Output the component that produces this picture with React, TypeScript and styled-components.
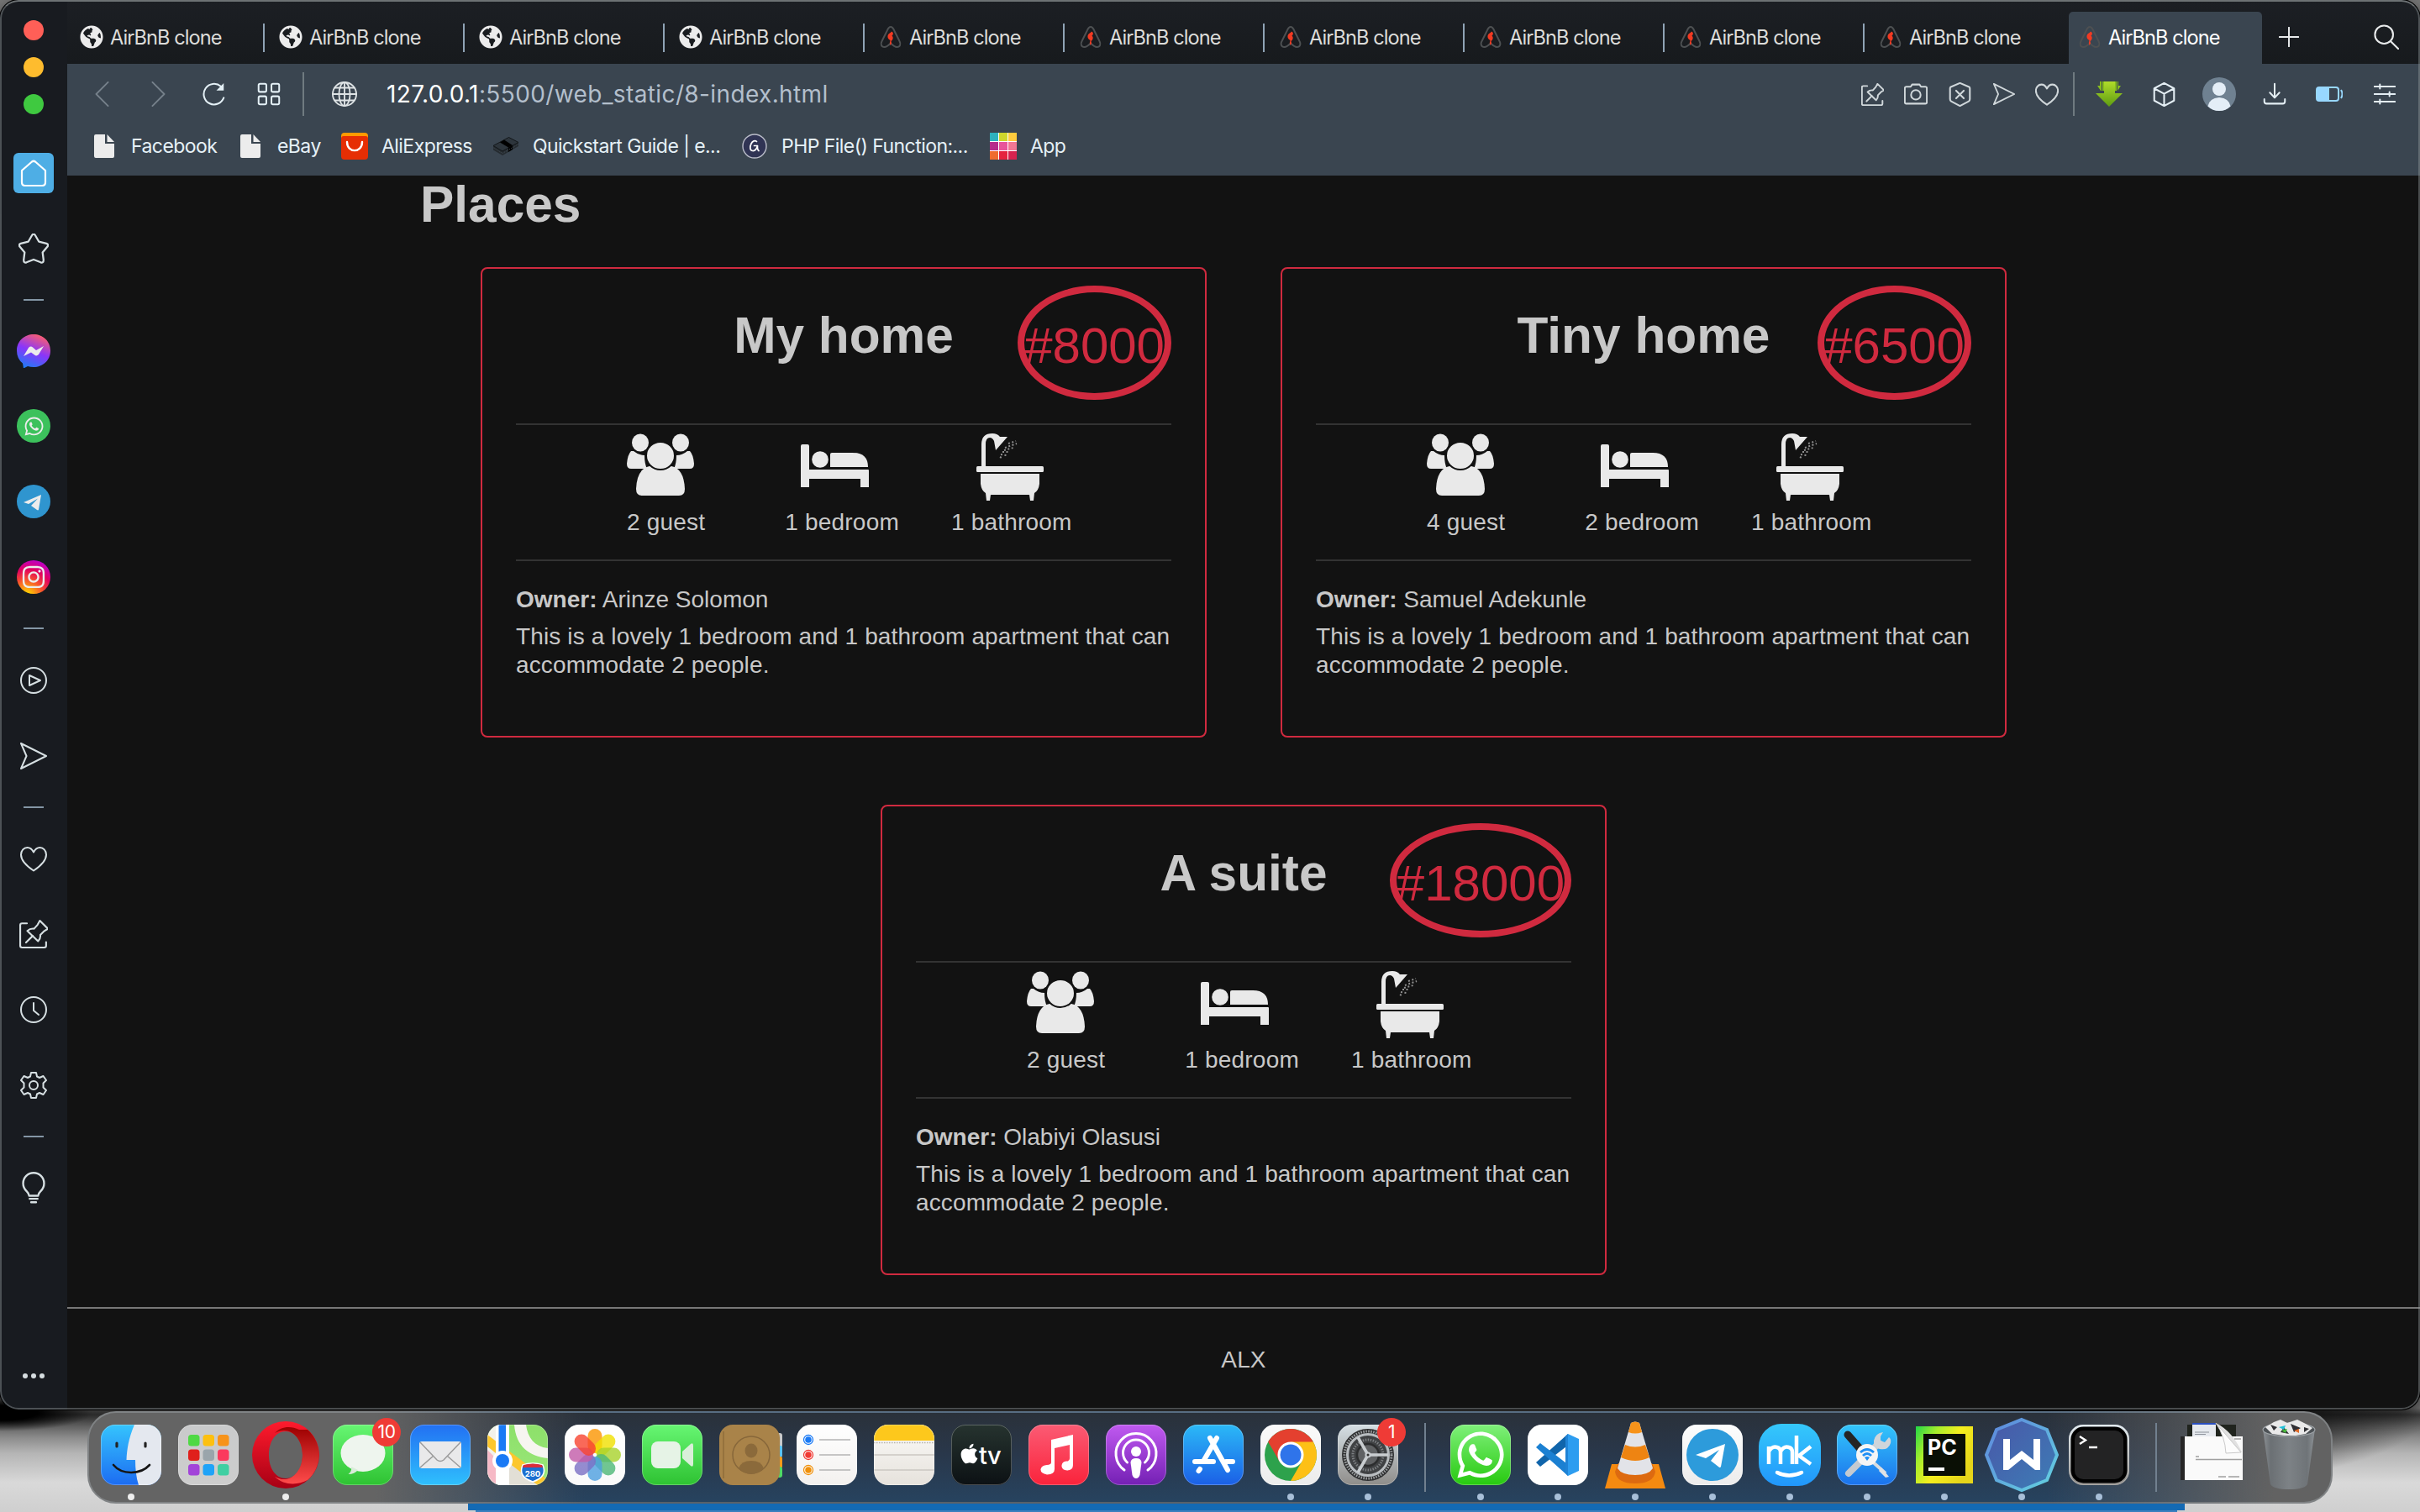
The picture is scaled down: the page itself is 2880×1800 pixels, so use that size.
import React from "react";
import styled, { createGlobalStyle } from "styled-components";
import { FaWhatsapp, FaInstagram, FaApple, FaGlobeAmericas } from "react-icons/fa";

const Global = createGlobalStyle`
  * { box-sizing: border-box; }
  html, body { margin: 0; padding: 0; }
  body { background: #8a8a8a; overflow: hidden; }
  svg { display: block; }
`;

const ui = `"Inter", "Noto Sans", sans-serif`;
const page = `"Liberation Sans", Arial, sans-serif`;

const Desktop = styled.div`
  width: 2880px;
  height: 1800px;
  display: flex;
  flex-direction: column;
  overflow: hidden;
  background:
    linear-gradient(#3a7fbe, #3a7fbe) 566px 1798px / 2025px 2px no-repeat,
    linear-gradient(#146ab4, #146ab4) 557px 1784px / 2043px 14px no-repeat,
    radial-gradient(ellipse 110px 22px at 0 1682px, #000 40%, transparent),
    radial-gradient(ellipse 330px 90px at 2560px 1680px, #111 40%, transparent),
    linear-gradient(to bottom, #777 0, #777 1676px, #3c3c3c 1684px, #8d8d8d 1712px, #b5b5b5 1730px, #d9d9d9 1765px, #cfcfcf 1800px);
`;

const Window = styled.div`
  height: 1678px;
  flex: none;
  display: flex;
  border-radius: 22px;
  overflow: hidden;
  background: #121212;
  position: relative;
  box-shadow: 0 0 0 1px #000, 0 6px 20px rgba(0, 0, 0, 0.6);
  &::after {
    content: "";
    position: absolute;
    inset: 0;
    border: 2px solid rgba(150, 158, 160, 0.42);
    border-top-color: #6d7274;
    border-radius: 22px;
    pointer-events: none;
  }
`;

const Sidebar = styled.aside`
  width: 80px;
  flex: none;
  background: #181b20;
  display: flex;
  flex-direction: column;
  align-items: center;
`;

const Lights = styled.div`
  height: 161px;
  flex: none;
  padding-top: 24px;
  display: flex;
  flex-direction: column;
  gap: 20px;
`;

const Light = styled.span<{ $c: string }>`
  width: 24px;
  height: 24px;
  border-radius: 50%;
  background: ${(p) => p.$c};
`;

const SideItem = styled.div<{ $h?: number }>`
  height: ${(p) => p.$h ?? 90}px;
  flex: none;
  display: flex;
  align-items: center;
  justify-content: center;
`;

const Dash = styled.span`
  width: 24px;
  height: 2px;
  background: #8496a5;
`;

const HomeTile = styled.span`
  width: 48px;
  height: 48px;
  border-radius: 6px;
  background: #4eaee5;
  display: flex;
  align-items: center;
  justify-content: center;
`;

const Puck = styled.span<{ $bg: string }>`
  width: 40px;
  height: 40px;
  border-radius: 50%;
  background: ${(p) => p.$bg};
  color: #ececec;
  display: flex;
  align-items: center;
  justify-content: center;
`;

const SideMore = styled.div`
  margin-top: auto;
  padding-bottom: 37px;
  display: flex;
  gap: 4px;
`;

const Dot6 = styled.i`
  width: 6px;
  height: 6px;
  border-radius: 50%;
  background: #d6dde0;
`;

const Main = styled.div`
  flex: 1;
  min-width: 0;
  display: flex;
  flex-direction: column;
`;

const TabStrip = styled.div`
  height: 76px;
  flex: none;
  background: linear-gradient(#1c1f24, #171a1d);
  display: flex;
  align-items: flex-end;
  padding-right: 25px;
`;

const Tab = styled.div<{ $first?: boolean }>`
  width: ${(p) => (p.$first ? 235 : 238)}px;
  height: 62px;
  flex: none;
  display: flex;
  align-items: center;
  padding: 0 0 2px ${(p) => (p.$first ? 15 : 17)}px;
  font: 400 23.6px ${ui};
  letter-spacing: -0.95px;
  color: #dcdcda;
  white-space: nowrap;
`;

const InactiveTab = styled(Tab)`
  background: linear-gradient(#8fa3b5, #8fa3b5) 100% 14px / 2px 34px no-repeat;
`;

const LastInactiveTab = styled(Tab)``;

const ActiveTab = styled(Tab)`
  width: 230px;
  margin-left: 5px;
  padding-left: 11px;
  background: #3a4550;
  border-radius: 5px 5px 0 0;
  color: #fff;
`;

const Favicon = styled.span`
  width: 28px;
  height: 28px;
  margin-right: 8px;
  display: flex;
  align-items: center;
  justify-content: center;
  color: #ececec;
`;

const StripButton = styled.div<{ $ml?: string }>`
  height: 62px;
  display: flex;
  align-items: center;
  padding-bottom: 2px;
  margin-left: ${(p) => p.$ml ?? "0"};
`;

const Toolbar = styled.div`
  height: 72px;
  flex: none;
  background: #3a4550;
  display: flex;
  align-items: center;
`;

const Slot = styled.span<{ $w: number }>`
  width: ${(p) => p.$w}px;
  flex: none;
  display: flex;
  justify-content: center;
`;

const Rule = styled.span`
  width: 2px;
  height: 52px;
  flex: none;
  background: #6f7a80;
`;

const Url = styled.div`
  flex: 1;
  padding-left: 18px;
  font: 400 28px ${ui};
  letter-spacing: 0.38px;
  color: #b3bfcc;
  b { font-weight: 400; color: #fff; }
`;

const Bookmarks = styled.div`
  height: 61px;
  flex: none;
  background: #3a4550;
  display: flex;
  align-items: center;
  padding: 0 0 9px 28px;
`;

const Bookmark = styled.div<{ $w: number }>`
  width: ${(p) => p.$w}px;
  display: flex;
  align-items: center;
  font: 400 23px ${ui};
  letter-spacing: -0.55px;
  color: #e6f1f7;
  white-space: nowrap;
`;

const MarkIcon = styled.span`
  width: 32px;
  margin-right: 16px;
  display: flex;
  justify-content: center;
`;

const Page = styled.main`
  flex: 1;
  display: flex;
  flex-direction: column;
  font: 400 28px/34px ${page};
  letter-spacing: 0.13px;
  color: #c8c8c8;
`;

const Heading = styled.h1`
  margin: 0;
  padding: 0 0 0 420px;
  height: 109px;
  font: 700 60.4px/68px ${page};
  letter-spacing: 0;
`;

const Places = styled.section`
  display: flex;
  flex-wrap: wrap;
  justify-content: center;
  gap: 80px 88px;
  padding: 0 480px;
`;

const Card = styled.article`
  width: 864px;
  height: 560px;
  border: 2px solid #d02a3f;
  border-radius: 8px;
  padding: 20px 40px 0;
  display: flex;
  flex-direction: column;
`;

const CardHead = styled.header`
  height: 164px;
  flex: none;
  display: grid;
  grid-template-columns: 1fr auto 1fr;
  align-items: start;
`;

const Title = styled.h2`
  grid-column: 2;
  margin: 24px 0 0;
  font: 700 60.4px/70px ${page};
  letter-spacing: 0;
`;

const Price = styled.div`
  justify-self: end;
  height: 136px;
  border: 8px solid #d02a3f;
  border-radius: 50%;
  color: #d02a3f;
  font: 400 60px/127px ${page};
  letter-spacing: 0;
`;

const Amenities = styled.div`
  height: 164px;
  flex: none;
  border-top: 2px solid #333;
  border-bottom: 2px solid #333;
  padding: 10px 0 0 132px;
`;

const AmenityIcons = styled.div`
  display: flex;
  gap: 127px;
  height: 84px;
`;

const AmenityLabels = styled.div`
  display: flex;
  padding-top: 5px;
  letter-spacing: 0.2px;
  white-space: nowrap;
`;

const Label = styled.span<{ $gap: number }>`
  margin-left: ${(p) => p.$gap}px;
`;

const Owner = styled.p`
  margin: 29px 0 10px;
  letter-spacing: 0;
`;

const About = styled.p`
  margin: 0 -2px 0 0;
`;

const Footer = styled.footer`
  margin-top: 38px;
  border-top: 2px solid #777;
  flex: 1;
  display: flex;
  justify-content: center;
  padding-top: 44px;
`;

const Dock = styled.div`
  margin: 2px 0 0 104px;
  width: 2672px;
  height: 110px;
  flex: none;
  border-radius: 34px;
  border: 2px solid rgba(190, 200, 205, 0.32);
  display: flex;
  padding: 0 4px;
  position: relative;
  background:
    linear-gradient(90deg, #646464 0, #646464 340px, rgba(100, 100, 100, 0) 590px, rgba(100, 100, 100, 0) 2330px, #626262 2600px),
    linear-gradient(#2a313a, #29374a 45%, #27435f);
`;

const DockCell = styled.div`
  width: 92px;
  flex: none;
  display: flex;
  flex-direction: column;
  align-items: center;
  padding-top: 14px;
  position: relative;
  svg { overflow: visible; }
`;

const Running = styled.i<{ $c: string }>`
  width: 8px;
  height: 8px;
  border-radius: 50%;
  margin-top: 10px;
  background: ${(p) => p.$c};
`;

const Badge = styled.span`
  position: absolute;
  left: 57px;
  top: 6px;
  width: 34px;
  height: 34px;
  border-radius: 50%;
  background: #ef3b36;
  color: #fff;
  font: 400 21px/34px ${ui};
  text-align: center;
  letter-spacing: -0.5px;
`;

const DockRule = styled.span`
  width: 42px;
  flex: none;
  display: flex;
  justify-content: center;
  &::before {
    content: "";
    width: 2px;
    height: 82px;
    margin: 12px 0 0 2px;
    background: #71808f;
  }
`;

type LineProps = { s?: number; w?: number; c?: string; children: React.ReactNode };
const Line = ({ s = 32, w = 2, c = "#d6dfe2", children }: LineProps) => (
  <svg width={s} height={s} viewBox="0 0 32 32" fill="none" stroke={c} strokeWidth={w} strokeLinecap="round" strokeLinejoin="round">
    {children}
  </svg>
);

const heart = <path d="M16 30.500C10 26.500 1 19.500 1 11.500C1 6.500 4.500 3 8.500 3C12 3 14.500 5.500 16 8.500C17.500 5.500 20 3 23.500 3C27.500 3 31 6.500 31 11.500C31 19.500 22 26.500 16 30.500Z" />;
const send = <path d="M1 1L31 16L1 31L7.500 16Z" />;
const pin = (
  <>
    <path d="M8.500 4H3Q1 4 1 6V29Q1 31 3 31H28Q30 31 30 29V25" />
    <path d="M23 1L32 10L28 12.500L23.500 17Q24 21 21 24L9 12.500Q12 9.500 16.500 10L20.500 5.500Z" />
    <path d="M15 18L7.500 25.500" />
  </>
);

const AirbnbMark = () => (
  <svg width="28" height="28" viewBox="0 0 28 28" fill="none">
    <path d="M14 2C11.500 2 10.800 4 9.500 7L3.500 19C1.500 22.500 3 26 6.500 26C9.500 26 12 23.500 14 21.500C16 23.500 18.500 26 21.500 26C25 26 26.500 22.500 24.500 19L18.500 7C17.200 4 16.500 2 14 2Z" stroke="#4d5052" strokeWidth="2" />
    <path d="M15 7.500C17.500 8.500 17.500 11 15.500 12.500C17.500 14.500 17 17 14.500 19L15 21.500L13.500 24L12.800 21L13.500 18C10.500 16.500 9.500 13 11.500 10.500C12.500 9.500 14 9 15 7.500Z" fill="#f13a22" />
  </svg>
);

const FileIcon = () => (
  <svg width="24" height="28" viewBox="0 0 24 28">
    <path d="M2 0H13V11H24V26Q24 28 22 28H2Q0 28 0 26V2Q0 0 2 0Z" fill="#ececec" />
    <path d="M15.500 0L24 9H15.500Z" fill="#ececec" />
  </svg>
);

const AliIcon = () => (
  <svg width="32" height="32" viewBox="0 0 32 32">
    <rect width="32" height="20" rx="4" fill="#ff9a00" />
    <path d="M0 7Q0 4 3 4H29Q32 4 32 7V28Q32 32 28 32H4Q0 32 0 28Z" fill="#e62e04" />
    <path d="M7 11C7 24.500 25 24.500 25 11" fill="none" stroke="#fff" strokeWidth="2.400" strokeLinecap="round" />
  </svg>
);

const QuickIcon = () => (
  <svg width="32" height="24" viewBox="0 0 32 24">
    <path d="M19.500 1.500L31 7.500V12L12 23L1 16.500V11.500Z" fill="#252b30" />
    <path d="M19.500 1.500L31 7.500L12 18L1 11.500Z" fill="#2d353c" stroke="#14181b" strokeWidth="1" />
    <path d="M14 4.500L9 7.500L19 13.500L24 11Z" fill="#000" />
    <path d="M19 13.500L24 11V16L19 19Z" fill="#000" />
    <path d="M1.500 14L12 20.500L31 9.500" stroke="#4a545c" strokeWidth=".9" strokeDasharray="1.200 1.200" fill="none" />
  </svg>
);

const PhpIcon = () => (
  <svg width="30" height="30" viewBox="0 0 30 30">
    <circle cx="15" cy="15" r="14" fill="#303454" stroke="#b9bcc8" strokeWidth="1.400" />
    <path d="M17.500 9.500C15.500 7.500 12.500 9 11 12C9 16 9.500 20 12.500 20.500C15.500 21 17.500 18 18.500 14.500H14.500M18.500 14.500C18.300 17 18.500 19.500 20 20.500" fill="none" stroke="#fff" strokeWidth="1.700" strokeLinecap="round" strokeLinejoin="round" />
  </svg>
);

const AppGridIcon = () => {
  const cols = ["#2fb1bd", "#cfd62c", "#ffcb3d", "#b62b8b", "#e8559a", "#f27794", "#ef6b2e", "#e5233f", "#d8234f"];
  return (
    <svg width="32" height="32" viewBox="0 0 32 32">
      <rect width="32" height="32" fill="#fff" />
      {cols.map((c, i) => (
        <rect key={c} x={(i % 3) * 11} y={Math.floor(i / 3) * 11} width="10" height="10" fill={c} />
      ))}
    </svg>
  );
};

const GuestIcon = () => (
  <svg width="80" height="80" viewBox="0 0 80 80" fill="#e9e9e9">
    <ellipse cx="16" cy="11" rx="10" ry="10.500" />
    <ellipse cx="64" cy="11" rx="10" ry="10.500" />
    <path d="M5 21Q1 25 0 36Q0 42 5 42L24 42Q21 36 21 26Q14 26 8 21Z" />
    <path d="M75 21Q79 25 80 36Q80 42 75 42L56 42Q59 36 59 26Q66 26 72 21Z" />
    <path d="M27 39Q12 42 11 66Q11 74 18 74H62Q69 74 69 66Q68 42 53 39Z" />
    <ellipse cx="40" cy="26.500" rx="17" ry="16.500" stroke="#121212" strokeWidth="2" />
  </svg>
);

const BedIcon = () => (
  <svg width="82" height="80" viewBox="0 0 82 80" fill="#e9e9e9">
    <path d="M0 15Q0 13 2 13H8Q10 13 10 15V43H80Q81 43 81 44V64H71V54H10V64H0Z" />
    <circle cx="23" cy="31" r="9.800" />
    <path d="M35 40V25Q35 23 37 23H62Q80 23 80 40Z" />
  </svg>
);

const BathIcon = () => (
  <svg width="80" height="84" viewBox="0 0 80 84" fill="#e9e9e9">
    <path d="M6 40V13Q6 0 19 0Q25 0 28 4L37 4L23 20L21 9Q19 5 16 5Q11 5 11 13V40Z" />
    <rect x="0" y="39" width="80" height="7" rx="1.500" />
    <path d="M5 48H75V60Q74 68 69 71L68 80H64L63 73H17L16 80H12L11 71Q6 68 5 60Z" />
    <g stroke="#8f8f8f" strokeWidth="2" strokeDasharray="2 2.500" fill="none">
      <path d="M34 17L48 12M33 20L44 17M31 22L40 22M29 25L36 26M28 28L32 30M38 12L47 9" />
    </g>
  </svg>
);

const Tile = ({ id, a, b, children }: { id: string; a: string; b: string; children?: React.ReactNode }) => (
  <svg width="72" height="72" viewBox="0 0 72 72">
    <defs>
      <linearGradient id={id} x1="0" y1="0" x2="0" y2="1">
        <stop offset="0" stopColor={a} />
        <stop offset="1" stopColor={b} />
      </linearGradient>
      <clipPath id={id + "c"}>
        <rect width="72" height="72" rx="17" />
      </clipPath>
    </defs>
    <g clipPath={`url(#${id}c)`}>
      <rect width="72" height="72" fill={`url(#${id})`} />
      {children}
    </g>
    <rect x=".5" y=".5" width="71" height="71" rx="16.500" fill="none" stroke="#fff" strokeOpacity=".25" />
  </svg>
);

const Finder = () => (
  <Tile id="finder" a="#35c4fd" b="#1c6cf2">
    <path d="M40 0C33 16 31 30 30.500 42H41C41 52 42 63 45 72H72V0Z" fill="#e4e8ef" />
    <path d="M19 22V26M53 22V26" stroke="#222" strokeWidth="3.200" strokeLinecap="round" />
    <path d="M15 48C25 60 47 60 58 48" fill="none" stroke="#151515" strokeWidth="2.600" strokeLinecap="round" />
  </Tile>
);

const Launchpad = () => {
  const c = ["#4fd944", "#fdc010", "#f7931a", "#e0201c", "#9aa5ab", "#fb3a5d", "#a243d9", "#1fa3f8", "#3fcfa2"];
  return (
    <Tile id="launch" a="#c9cacb" b="#cdcdcd">
      {c.map((f, i) => (
        <rect key={f} x={12 + (i % 3) * 17.500} y={12 + Math.floor(i / 3) * 17.500} width="13.500" height="13.500" rx="3.500" fill={f} />
      ))}
    </Tile>
  );
};

const Opera = () => (
  <svg width="80" height="80" viewBox="0 0 80 80">
    <defs>
      <linearGradient id="op1" x1="0" y1="0" x2="0" y2="1">
        <stop offset="0" stopColor="#ff1b2d" />
        <stop offset="1" stopColor="#a70014" />
      </linearGradient>
      <linearGradient id="op2" x1="0" y1="0" x2="0" y2="1">
        <stop offset="0" stopColor="#9c0000" />
        <stop offset="1" stopColor="#ff4b4b" />
      </linearGradient>
    </defs>
    <path fillRule="evenodd" d="M40 0A40 40 0 1 0 40 80A40 40 0 1 0 40 0ZM40 12C52 12 60 24 60 40S52 68 40 68S20 56 20 40S28 12 40 12Z" fill="url(#op1)" />
    <path d="M27 14C34 6 46 5 56 10L66 10A40 40 0 0 1 66 70C55 76 38 77 27 66C45 76 60 60 60 40S45 4 27 14Z" fill="url(#op2)" />
  </svg>
);

const Messages = () => (
  <Tile id="msg" a="#67f673" b="#2ec232">
    <ellipse cx="36" cy="34" rx="26.500" ry="22" fill="#eef5ee" />
    <path d="M22 50Q23 56 18.500 59Q26 59 30 54Z" fill="#d9ecd9" />
  </Tile>
);

const Mail = () => (
  <Tile id="mail" a="#2270f2" b="#2fc0fd">
    <rect x="11" y="20" width="50" height="32" rx="3" fill="#e9e9ea" />
    <path d="M12 21L32 42Q36 45 40 42L60 21M12 51L28 37M60 51L44 37" fill="none" stroke="#9b9b9b" strokeWidth="1.500" />
  </Tile>
);

const Maps = () => (
  <Tile id="maps" a="#8de06a" b="#9be77a">
    <path d="M0 0H26V72H0Z" fill="#f3f1ea" />
    <path d="M0 30L10 40V72H0Z" fill="#f6b9c6" />
    <path d="M0 12L72 66V72H58L0 26Z" fill="#fcc72e" />
    <path d="M32 0C34 26 50 38 72 40V28C56 26 48 16 46 0Z" fill="#f6f5f0" />
    <path d="M26 46L60 72H26Z" fill="#e2dfd6" />
    <rect x="10" y="0" width="16" height="72" fill="#fff" />
    <rect x="13.500" y="0" width="8.500" height="42" fill="#1a7af5" />
    <circle cx="18" cy="43" r="12" fill="#fff" />
    <circle cx="18" cy="43" r="8" fill="#1a7af5" />
    <path d="M42 48Q54 44 66 48Q72 62 54 68Q36 62 42 48Z" fill="#1b6fd0" stroke="#fff" strokeWidth="1.500" />
    <path d="M43 48Q54 45 65 48L66 51H42Z" fill="#d92d3a" />
    <text x="54" y="61.500" fontSize="9.500" fontFamily="Inter" fontWeight="700" fill="#fff" textAnchor="middle">280</text>
  </Tile>
);

const Photos = () => {
  const c = ["#fb9500", "#f0e000", "#a8d22a", "#4db877", "#4c9fe0", "#7b6fc4", "#c25aa8", "#f8432f"];
  return (
    <Tile id="photos" a="#fff" b="#fafafa">
      {c.map((f, i) => (
        <rect key={f} x="27.500" y="5" width="17" height="29" rx="8.500" fill={f} fillOpacity=".8" transform={`rotate(${i * 45} 36 36)`} />
      ))}
    </Tile>
  );
};

const FaceTime = () => (
  <Tile id="ft" a="#67f673" b="#2ec232">
    <rect x="11" y="20" width="35" height="32" rx="8" fill="#e6f3e6" />
    <path d="M48 32L58 23Q61 21 61 25V47Q61 51 58 49L48 40Z" fill="#d9efd9" />
  </Tile>
);

const Contacts = () => (
  <svg width="72" height="72" viewBox="0 0 72 72">
    <rect x="60" y="10" width="15" height="18" rx="3" fill="#c9c9c9" />
    <rect x="60" y="25" width="15" height="14" rx="2" fill="#5ac1f2" />
    <rect x="60" y="38" width="15" height="14" rx="2" fill="#f79a1a" />
    <rect x="60" y="50" width="15" height="13" rx="3" fill="#4fd964" />
    <rect width="72" height="72" rx="16" fill="#a98349" />
    <path d="M5 8V64" stroke="#8f6c3a" strokeWidth="1.500" />
    <circle cx="38" cy="36" r="22" fill="none" stroke="#87673a" strokeWidth="1.500" />
    <ellipse cx="38" cy="31" rx="7.500" ry="8.500" fill="#8b6a3b" />
    <path d="M23 52Q26 43 38 43T53 52Q46 59 38 59T23 52Z" fill="#8b6a3b" />
  </svg>
);

const Reminders = () => (
  <Tile id="rem" a="#fff" b="#f3f1ef">
    {["#1a7af5", "#f03a34", "#f0900a"].map((c, i) => (
      <g key={c}>
        <circle cx="14" cy={18 + i * 18} r="5.500" fill="#fff" stroke={c} strokeWidth="1.300" />
        <circle cx="14" cy={18 + i * 18} r="3.800" fill={c} />
        <path d={`M27 ${18 + i * 18}H64`} stroke="#b5b5b5" strokeWidth="1.500" />
      </g>
    ))}
  </Tile>
);

const Notes = () => (
  <Tile id="notes" a="#fbfaf8" b="#e6e2dc">
    <rect width="72" height="19" fill="#fdc81c" />
    <path d="M0 21.500H72" stroke="#b7b3ab" strokeWidth="1.500" strokeDasharray="1.500 1.500" />
    <path d="M0 36H72M0 54H72" stroke="#ccc8c2" strokeWidth="1.500" />
  </Tile>
);

const AppleTv = () => (
  <Tile id="tv" a="#26332f" b="#0c1114">
    <g transform="translate(8 21)">
      <FaApple size={27} color="#fff" />
    </g>
    <text x="33" y="47" fontSize="29" fontFamily="Inter" fontWeight="500" fill="#fff" letterSpacing="-.5">tv</text>
  </Tile>
);

const Music = () => (
  <Tile id="music" a="#fb5b74" b="#fa233b">
    <path d="M27 18L53 12V48Q53 54 46 54.500Q39 54 39.500 48.500Q40 44 45 43.500Q49 43.500 49 40V24L31 28V53Q31 59 22 59.500Q14 58 14.500 53Q15.500 48.500 22 48Q27 47.500 27 45Z" fill="#fff" />
  </Tile>
);

const Podcasts = () => (
  <Tile id="pod" a="#c05af0" b="#7420b4">
    <g fill="none" stroke="#fff" strokeWidth="3" strokeLinecap="round">
      <path d="M22 54A24 24 0 1 1 50 54" />
      <path d="M25.500 45A15.500 15.500 0 1 1 46.500 45" />
    </g>
    <circle cx="36" cy="32" r="6" fill="#fff" />
    <path d="M29.500 45Q30 40 36 40T42.500 45L40.500 60Q39 64 36 64T31.500 60Z" fill="#fff" />
  </Tile>
);

const AppStore = () => (
  <Tile id="as" a="#2bb9f7" b="#1b5fe6">
    <g stroke="#fff" strokeWidth="6" strokeLinecap="round">
      <path d="M40 16L25 42M32 16L53 54M14 44H36M51 44H59M20 53L18.500 55" />
    </g>
  </Tile>
);

const Chrome = () => (
  <Tile id="chr" a="#fafafa" b="#ececec">
    <circle cx="36" cy="36" r="31" fill="#2da24c" />
    <path d="M36 36L9.200 20.500A31 31 0 0 1 62.800 20.500Z" fill="#e4402f" />
    <path d="M36 20.500H62.800A31 31 0 0 1 36 67L49.400 43.700Z" fill="#fdc016" />
    <path d="M9.200 20.500L22.600 43.700L36 36V20.500Z" fill="#e4402f" />
    <circle cx="36" cy="36" r="15.500" fill="#fff" />
    <circle cx="36" cy="36" r="12.500" fill="#2f74ea" />
  </Tile>
);

const Settings = () => (
  <Tile id="set" a="#d5dfe4" b="#8f8d8a">
    <circle cx="36" cy="36" r="31" fill="#2e2f30" />
    <circle cx="36" cy="36" r="28" fill="none" stroke="#9fa2a4" strokeWidth="3" strokeDasharray="1.500 1.500" />
    <circle cx="36" cy="36" r="24.500" fill="#3f4143" stroke="#b9bdc0" strokeWidth="3" />
    <circle cx="36" cy="36" r="18" fill="none" stroke="#7c7f82" strokeWidth="3" strokeDasharray="1.500 1.500" />
    <circle cx="36" cy="36" r="13" fill="#606264" stroke="#2c2d2e" strokeWidth="2.500" />
    <path d="M36 36H60M36 36L24 15M36 36L24 57" stroke="#c9cdd0" strokeWidth="3.600" />
    <circle cx="36" cy="36" r="3.600" fill="#c9cdd0" />
    <circle cx="36" cy="36" r="1.500" fill="#333" />
  </Tile>
);

const WhatsAppTile = () => (
  <Tile id="wa" a="#7ff07a" b="#27c90f">
    <g transform="translate(4.500 4.500)">
      <FaWhatsapp size={63} color="#fff" />
    </g>
  </Tile>
);

const VsCode = () => (
  <Tile id="vs" a="#fff" b="#fff">
    <path d="M48 11L10 45L15 50L50 23Z" fill="#1065ab" />
    <path d="M10 27L15 22L50 49L48 61Z" fill="#1b80d2" />
    <path d="M48 11L61 17V55L48 61Z" fill="#2d9df0" />
    <path d="M48 11V61L45 58V14Z" fill="#1f83d6" />
  </Tile>
);

const Vlc = () => (
  <svg width="72" height="80" viewBox="0 0 72 80">
    <path d="M8 51H64L72 80H0Z" fill="#f58a10" />
    <path d="M12 60Q14 74 36 74T60 60L56 50H16Z" fill="#dd6a10" />
    <path d="M31 2Q36-1 41 2L57 56Q52 64 36 64T15 56Z" fill="#e2e3e8" />
    <path d="M31 2Q36-1 41 2L44 13Q36 16 28 13Z" fill="#f7931a" />
    <path d="M24 28Q36 33 48 28L53 43Q36 51 19 43Z" fill="#ee8412" />
  </svg>
);

const TelegramTile = () => (
  <Tile id="tg" a="#fdfdfd" b="#ececec">
    <circle cx="36" cy="36" r="31" fill="#2d9bdb" />
    <path d="M16 36L51 23L46 50Q45 52 43 50L34 43L44 30L28 40Z" fill="#fff" />
  </Tile>
);

const Mk = () => (
  <svg width="74" height="74" viewBox="0 0 74 74">
    <defs>
      <linearGradient id="mk" x1="0" y1="0" x2="0" y2="1">
        <stop offset="0" stopColor="#35c8fb" />
        <stop offset="1" stopColor="#2196fb" />
      </linearGradient>
    </defs>
    <rect width="74" height="74" rx="27" fill="url(#mk)" />
    <path d="M12 48V27M12 33Q16 26 22 28Q26 29 26 34V48M26 33Q30 26 36 28Q40 29 40 34V48M45 14V48M62 27L48 38L62 48" fill="none" stroke="#fff" strokeWidth="4.500" />
    <path d="M22 58Q36 65 51 58" fill="none" stroke="#fff" strokeWidth="4.500" strokeLinecap="round" />
  </svg>
);

const Tools = () => (
  <Tile id="tools" a="#33c6fb" b="#1b72ec">
    <path d="M13 12L34 36" stroke="#242424" strokeWidth="9" strokeLinecap="round" />
    <path d="M40 42L58 58" stroke="#d8dce0" strokeWidth="4" />
    <path d="M53 51L62 62L58 63L50 55Z" fill="#dfe2e5" />
    <path d="M14 58L50 22" stroke="#c5cad0" strokeWidth="8" strokeLinecap="round" />
    <path d="M55 9Q46 10 44 19Q43 28 51 29Q61 31 64 22Q65 17 62 15L57 21L52 19V14Z" fill="#cfd5da" />
    <circle cx="36" cy="36" r="13" fill="#f5f5f5" />
    <path d="M28 33Q36 26 44 33M31 37Q36 32 41 37" fill="none" stroke="#1f8ff5" strokeWidth="2.800" />
    <path d="M33 39Q36 37 39 39L36 43Z" fill="#1f8ff5" />
  </Tile>
);

const PyCharm = () => (
  <svg width="68" height="68" viewBox="0 0 68 68">
    <defs>
      <linearGradient id="py" x1="0" y1="0" x2="1" y2=".6">
        <stop offset="0" stopColor="#21d747" />
        <stop offset=".3" stopColor="#a6ee2c" />
        <stop offset=".6" stopColor="#f5ee1e" />
        <stop offset="1" stopColor="#e6d51a" />
      </linearGradient>
    </defs>
    <rect width="68" height="68" fill="url(#py)" />
    <rect x="9" y="9" width="50" height="50" fill="#0a0f05" />
    <text x="14" y="34" fontFamily="Inter" fontWeight="700" fontSize="25" fill="#fff">PC</text>
    <rect x="15" y="49" width="19" height="4" fill="#fff" />
  </svg>
);

const Windscribe = () => (
  <svg width="88" height="88" viewBox="0 0 88 88">
    <defs>
      <linearGradient id="wsl" x1="0" y1="0" x2="1" y2="1">
        <stop offset="0" stopColor="#5d84dc" />
        <stop offset="1" stopColor="#63d3e0" />
      </linearGradient>
      <linearGradient id="wsf" x1="0" y1="0" x2="1" y2="1">
        <stop offset="0" stopColor="#4957a8" />
        <stop offset="1" stopColor="#3d7db6" />
      </linearGradient>
    </defs>
    <path d="M44 2L74 14L86 44L74 74L44 86L14 74L2 44L14 14Z" fill="url(#wsf)" stroke="url(#wsl)" strokeWidth="4" />
    <path d="M22 25H30V50L44 39L58 50V25H66V62H60L44 49L28 62H22Z" fill="#fff" />
  </svg>
);

const Terminal = () => (
  <Tile id="term" a="#dfe9ef" b="#8f8c88">
    <rect x="2.500" y="2.500" width="67" height="67" rx="15" fill="#000" />
    <rect x="7" y="7" width="58" height="58" rx="10" fill="#232324" />
    <path d="M13 14L20 18.500L13 23" fill="none" stroke="#fff" strokeWidth="2.400" />
    <path d="M24 27H34" stroke="#fff" strokeWidth="2.400" />
  </Tile>
);

const Docs = () => (
  <svg width="74" height="72" viewBox="0 0 74 72">
    <rect x="8" y="0" width="58" height="20" fill="#20241e" />
    <rect x="14" y="-1" width="28" height="20" fill="#e6e9ee" />
    <rect x="14" y="-2" width="28" height="2" fill="#2a4fc0" />
    <path d="M17 9H34M17 11.500H30" stroke="#8d939b" strokeWidth="1" />
    <rect x="0" y="14" width="5" height="52" fill="#262626" />
    <rect x="5" y="14" width="69" height="52" fill="#fafafa" />
    <path d="M42-2Q55 16 55 34L73 33Q62 8 42-2Z" fill="#e0e0e0" />
    <path d="M42-2Q53 14 54 34L72 33Z" fill="#fcfcfc" stroke="#c4c4c4" strokeWidth=".9" />
    <path d="M18 38H22M18 41.500H73M45 62H54M57 62H70M64 17H72" stroke="#a0a0a0" strokeWidth="1.300" />
  </svg>
);

const Trash = () => (
  <svg width="64" height="82" viewBox="0 0 64 82">
    <defs>
      <linearGradient id="bin" x1="0" y1="0" x2="1" y2="0">
        <stop offset="0" stopColor="#8b9094" />
        <stop offset=".15" stopColor="#6b7074" />
        <stop offset=".5" stopColor="#7d8286" />
        <stop offset=".85" stopColor="#6f7478" />
        <stop offset="1" stopColor="#8d9296" />
      </linearGradient>
    </defs>
    <path d="M1 10Q32 24 63 10L54 76Q50 82 32 82T10 76Z" fill="url(#bin)" />
    <ellipse cx="32" cy="11" rx="31" ry="8" fill="#4d5256" stroke="#9da2a6" strokeWidth="1.200" />
    <path d="M4 8L14 2L22-1L30 3L42-1L52 4L60 9L52 16L40 18L26 18L12 16Z" fill="#e9e9e9" />
    <path d="M10 5L18 8L14 12ZM34 4L46 9L38 14ZM26 8L32 16L22 14ZM50 8L56 10L50 14Z" fill="#2f2f33" />
    <path d="M20 8L28 6L26 11Z" fill="#1fbfd6" />
    <path d="M23 12L30 10L28 15Z" fill="#49b93f" />
    <path d="M38 12L44 10L44 15Z" fill="#e06a28" />
  </svg>
);

type DockApp = { el: React.ReactNode; run?: string; badge?: string };
const W = "#eeeeee";
const B = "#a8bfd8";
const dockLeft: DockApp[] = [
  { el: <Finder />, run: W },
  { el: <Launchpad /> },
  { el: <Opera />, run: W },
  { el: <Messages />, badge: "10" },
  { el: <Mail /> },
  { el: <Maps /> },
  { el: <Photos /> },
  { el: <FaceTime /> },
  { el: <Contacts /> },
  { el: <Reminders /> },
  { el: <Notes /> },
  { el: <AppleTv /> },
  { el: <Music /> },
  { el: <Podcasts /> },
  { el: <AppStore /> },
  { el: <Chrome />, run: B },
  { el: <Settings />, run: B, badge: "1" },
];
const dockMid: DockApp[] = [
  { el: <WhatsAppTile />, run: B },
  { el: <VsCode />, run: B },
  { el: <Vlc />, run: B },
  { el: <TelegramTile />, run: B },
  { el: <Mk />, run: B },
  { el: <Tools />, run: B },
  { el: <PyCharm />, run: B },
  { el: <Windscribe />, run: B },
  { el: <Terminal />, run: B },
];
const dockEnd: DockApp[] = [{ el: <Docs /> }, { el: <Trash /> }];

const IconBox = styled.div`
  width: 72px;
  height: 72px;
  display: flex;
  align-items: center;
  justify-content: center;
  svg { flex: none; }
`;

const DockItem = ({ a }: { a: DockApp }) => (
  <DockCell>
    <IconBox>{a.el}</IconBox>
    {a.run && <Running $c={a.run} />}
    {a.badge && <Badge>{a.badge}</Badge>}
  </DockCell>
);

const places = [
  { name: "My home", price: "#8000", guest: 2, bed: 1, owner: "Arinze Solomon" },
  { name: "Tiny home", price: "#6500", guest: 4, bed: 2, owner: "Samuel Adekunle" },
  { name: "A suite", price: "#18000", guest: 2, bed: 1, owner: "Olabiyi Olasusi" },
];

const PlaceCard = ({ p }: { p: (typeof places)[number] }) => (
  <Card>
    <CardHead>
      <Title>{p.name}</Title>
      <Price>{p.price}</Price>
    </CardHead>
    <Amenities>
      <AmenityIcons>
        <GuestIcon />
        <BedIcon />
        <BathIcon />
      </AmenityIcons>
      <AmenityLabels>
        <Label $gap={0}>{p.guest} guest</Label>
        <Label $gap={95}>{p.bed} bedroom</Label>
        <Label $gap={62}>1 bathroom</Label>
      </AmenityLabels>
    </Amenities>
    <Owner>
      <b>Owner:</b> {p.owner}
    </Owner>
    <About>This is a lovely 1 bedroom and 1 bathroom apartment that can accommodate 2 people.</About>
  </Card>
);

const bookmarks = [
  { icon: <FileIcon />, text: "Facebook", w: 174 },
  { icon: <FileIcon />, text: "eBay", w: 124 },
  { icon: <AliIcon />, text: "AliExpress", w: 180 },
  { icon: <QuickIcon />, text: "Quickstart Guide | e...", w: 296 },
  { icon: <PhpIcon />, text: "PHP File() Function:...", w: 296 },
  { icon: <AppGridIcon />, text: "App", w: 110 },
];

export default function App() {
  return (
    <Desktop>
      <Global />
      <Window>
        <Sidebar>
          <Lights>
            <Light $c="#ff5f57" />
            <Light $c="#febc2e" />
            <Light $c="#3fc940" />
          </Lights>
          <SideItem>
            <HomeTile>
              <Line c="#fff" w={2.2} s={32}>
                <path d="M2 13L14 2.500Q16 1 18 2.500L30 13V27Q30 31 26 31H6Q2 31 2 27Z" />
              </Line>
            </HomeTile>
          </SideItem>
          <SideItem>
            <Line s={36}>
              <path d="M14.200 2Q16-1 17.800 2L21.500 8.500L29.500 10.500Q32.500 11.500 30.500 14L25.500 20L26.500 28Q26.500 31.500 23.500 30.500L16 27.500L8.500 30.500Q5.500 31.500 5.500 28L6.500 20L1.500 14Q-.5 11.500 2.500 10.500L10.500 8.500Z" />
            </Line>
          </SideItem>
          <SideItem $h={32}><Dash /></SideItem>
          <SideItem $h={89}>
            <svg width="40" height="40" viewBox="0 0 40 40">
              <defs>
                <linearGradient id="mes" x1=".3" y1="1" x2=".7" y2="0">
                  <stop offset="0" stopColor="#1f7cf5" />
                  <stop offset=".5" stopColor="#8a35fa" />
                  <stop offset="1" stopColor="#fd5f6b" />
                </linearGradient>
              </defs>
              <path d="M20 0C31 0 40 8 40 19.500S31 39 20 39Q16 39 13 38L8 40.500L7 34.500Q0 29 0 19.500C0 8 9 0 20 0Z" fill="url(#mes)" />
              <path d="M8 26L14 16Q16.500 13.500 19 15.500L23 19L32 14L26 24Q23.500 26.500 21 24.500L17 21.500Z" fill="#ececec" />
            </svg>
          </SideItem>
          <SideItem><Puck $bg="#3cc15c"><FaWhatsapp size={25} /></Puck></SideItem>
          <SideItem>
            <Puck $bg="#2f95cf">
              <svg width="40" height="40" viewBox="0 0 40 40">
                <path d="M8 21L29 12L26 29.500Q25.500 31 24 30L17 25L25 16.500L14 23Z" fill="#ececec" />
              </svg>
            </Puck>
          </SideItem>
          <SideItem $h={89}>
            <Puck $bg="radial-gradient(circle at 30% 105%, #ffd400 5%, #f7502e 38%, #e1005f 62%, #c400b8 82%, #7b16f0)">
              <FaInstagram size={30} />
            </Puck>
          </SideItem>
          <SideItem $h={34}><Dash /></SideItem>
          <SideItem>
            <Line>
              <circle cx="16" cy="16" r="15" />
              <path d="M11 10V22L24 16Z" />
            </Line>
          </SideItem>
          <SideItem $h={89}><Line>{send}</Line></SideItem>
          <SideItem $h={33}><Dash /></SideItem>
          <SideItem><Line>{heart}</Line></SideItem>
          <SideItem $h={89}><Line s={34}>{pin}</Line></SideItem>
          <SideItem $h={91}>
            <Line>
              <circle cx="16" cy="16" r="15" />
              <path d="M16 8V17L22 22" />
            </Line>
          </SideItem>
          <SideItem>
            <Line>
              <circle cx="16" cy="16" r="5" />
              <path d="M13 1H19L20 5.500L23 7L27.500 5L31 10L27.500 13.500V18.500L31 22L27.500 27L23 25L20 26.500L19 31H13L12 26.500L9 25L4.500 27L1 22L4.500 18.500V13.500L1 10L4.500 5L9 7L12 5.500Z" />
            </Line>
          </SideItem>
          <SideItem $h={32}><Dash /></SideItem>
          <SideItem>
            <Line s={38}>
              <path d="M11.500 24Q11.500 22 9 19.500Q5.500 16 5.500 11.500A10.500 10.500 0 0 1 26.500 11.500Q26.500 16 23 19.500Q20.500 22 20.500 24ZM12 27H20M13.500 30.500H18.500" />
            </Line>
          </SideItem>
          <SideMore><Dot6 /><Dot6 /><Dot6 /></SideMore>
        </Sidebar>
        <Main>
          <TabStrip>
            {Array.from({ length: 10 }, (_, i) => {
              const T = i === 9 ? LastInactiveTab : InactiveTab;
              return (
                <T key={i} $first={i === 0}>
                  <Favicon>{i < 4 ? <FaGlobeAmericas size={28} /> : <AirbnbMark />}</Favicon>
                  AirBnB clone
                </T>
              );
            })}
            <ActiveTab>
              <Favicon><AirbnbMark /></Favicon>
              AirBnB clone
            </ActiveTab>
            <StripButton $ml="20px">
              <Line s={24} w={2.6} c="#e8eaeb"><path d="M16 1V31M1 16H31" /></Line>
            </StripButton>
            <StripButton $ml="auto">
              <Line s={30} w={2.2} c="#e8eaeb">
                <circle cx="13" cy="13" r="11.500" />
                <path d="M21.500 21.500L31 31" />
              </Line>
            </StripButton>
          </TabStrip>
          <Toolbar>
            <Slot $w={84}>
              <Line s={30} c="#75808a"><path d="M23 1L8 16L23 31" /></Line>
            </Slot>
            <Slot $w={48}>
              <Line s={30} c="#75808a"><path d="M9 1L24 16L9 31" /></Line>
            </Slot>
            <Slot $w={84}>
              <Line s={28} c="#e4f0f6" w={2.3}>
                <path d="M26 5.500A14 14 0 1 0 30 21" />
                <path d="M30 1V11H20Z" fill="#e4f0f6" stroke="none" />
              </Line>
            </Slot>
            <Slot $w={48}>
              <Line s={28} c="#e4f0f6" w={2.3}>
                <rect x="2" y="2" width="10.500" height="11" rx="2" />
                <rect x="19.500" y="2" width="10.500" height="11" rx="2" />
                <rect x="2" y="19" width="10.500" height="11" rx="2" />
                <rect x="19.500" y="19" width="10.500" height="11" rx="2" />
              </Line>
            </Slot>
            <Slot $w={34}><Rule /></Slot>
            <Slot $w={64}>
              <Line s={30} c="#dde2e4">
                <circle cx="16" cy="16" r="15" />
                <ellipse cx="16" cy="16" rx="7" ry="15" />
                <path d="M1 16H31M16 1V31M3.500 8H28.500M3.500 24H28.500" />
              </Line>
            </Slot>
            <Url><b>127.0.0.1</b>:5500/web_static/8-index.html</Url>
            <Slot $w={52}><Line s={27} w={2.3} c="#d0d7da">{pin}</Line></Slot>
            <Slot $w={52}>
              <Line s={28} w={2.3} c="#d0d7da">
                <path d="M3 6H9L11 3H21L23 6H29Q31 6 31 8V27Q31 29 29 29H3Q1 29 1 27V8Q1 6 3 6Z" />
                <circle cx="16" cy="17" r="6.500" />
              </Line>
            </Slot>
            <Slot $w={52}>
              <Line s={29} w={2.3} c="#d0d7da">
                <path d="M16 1L28 6Q29 6.500 29 8V22Q29 24 27.500 25L16 31L4.500 25Q3 24 3 22V8Q3 6.500 4 6Z" />
                <path d="M11 11L21 21M21 11L11 21" />
              </Line>
            </Slot>
            <Slot $w={53}><Line s={26} w={2.3} c="#d0d7da">{send}</Line></Slot>
            <Slot $w={50}><Line s={28} w={2.3} c="#d0d7da">{heart}</Line></Slot>
            <Slot $w={14}><Rule /></Slot>
            <Slot $w={70}>
              <svg width="32" height="32" viewBox="0 0 32 32">
                <defs>
                  <linearGradient id="dl" x1="0" y1="0" x2="0" y2="1">
                    <stop offset="0" stopColor="#b0dc2a" />
                    <stop offset="1" stopColor="#5d9c12" />
                  </linearGradient>
                </defs>
                <path d="M5 1H27V6L30 6L26 12H6L2 6H5Z" fill="#86bd1c" />
                <path d="M10 1H23V15H32L16 31L0 15H10Z" fill="url(#dl)" />
                <path d="M7.500 1V12M25.500 1V12" stroke="#3a4550" />
              </svg>
            </Slot>
            <Slot $w={60}>
              <Line s={29} w={2.3} c="#e4eef4">
                <path d="M16 1L29 8V24L16 31L3 24V8ZM3 8L16 15L29 8M16 15V31" />
              </Line>
            </Slot>
            <Slot $w={71}>
              <svg width="40" height="40" viewBox="0 0 40 40">
                <circle cx="20" cy="20" r="20" fill="#6f8191" />
                <circle cx="20" cy="14" r="8" fill="#e4eef7" />
                <path d="M6.500 34.500Q8 25 20 24Q32 25 33.500 34.500Q28 40 20 40T6.500 34.500Z" fill="#e4eef7" />
              </svg>
            </Slot>
            <Slot $w={62}>
              <Line s={28} w={2.3} c="#e4eef4">
                <path d="M16 2V20M9.500 14L16 21L22.500 14M2 23V26Q2 29 5 29H27Q30 29 30 26V23" />
              </Line>
            </Slot>
            <Slot $w={68}>
              <svg width="32" height="18" viewBox="0 0 32 18">
                <rect x="1" y="1" width="26" height="16" rx="3" fill="none" stroke="#98d8ff" strokeWidth="2" />
                <rect x="1" y="1" width="15" height="16" fill="#98d8ff" />
                <path d="M30 4Q33 9 30 14" stroke="#98d8ff" strokeWidth="2" fill="none" />
              </svg>
            </Slot>
            <Slot $w={64}>
              <Line s={26} w={2.5} c="#e4eef4">
                <path d="M1 5H31M1 16H31M1 27H31M9 2V8M23 13V19M9 24V30" />
              </Line>
            </Slot>
            <Slot $w={10} />
          </Toolbar>
          <Bookmarks>
            {bookmarks.map((b) => (
              <Bookmark key={b.text} $w={b.w}>
                <MarkIcon>{b.icon}</MarkIcon>
                {b.text}
              </Bookmark>
            ))}
          </Bookmarks>
          <Page>
            <Heading>Places</Heading>
            <Places>
              {places.map((p) => (
                <PlaceCard key={p.name} p={p} />
              ))}
            </Places>
            <Footer>ALX</Footer>
          </Page>
        </Main>
      </Window>
      <Dock>
        {dockLeft.map((a, i) => <DockItem key={i} a={a} />)}
        <DockRule />
        {dockMid.map((a, i) => <DockItem key={i} a={a} />)}
        <DockRule />
        {dockEnd.map((a, i) => <DockItem key={i} a={a} />)}
      </Dock>
    </Desktop>
  );
}
